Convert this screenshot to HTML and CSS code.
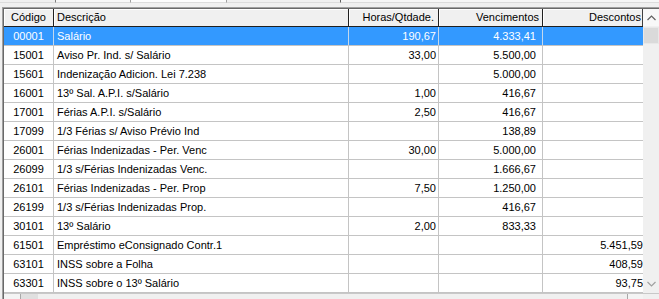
FILE: index.html
```html
<!DOCTYPE html>
<html lang="pt-BR">
<head>
<meta charset="utf-8">
<link rel="stylesheet" href="styles.css">
</head>
<body>
<div class="top">
  <div class="tb tb1"></div>
  <div class="tb tb1b"></div>
  <div class="tb tb2"></div>
  <div class="tb tb3"></div>
  <div class="tb tb4"></div>
</div>
<div class="frame">
  <div class="main">
    <div class="grid">
      <div class="row head">
        <div class="c code">Código</div>
        <div class="c desc">Descrição</div>
        <div class="c hrs">Horas/Qtdade.</div>
        <div class="c venc">Vencimentos</div>
        <div class="c dsc">Descontos</div>
      </div>
      <div class="row sel"><div class="c code">00001</div><div class="c desc">Salário</div><div class="c hrs">190,67</div><div class="c venc">4.333,41</div><div class="c dsc"></div></div>
      <div class="row"><div class="c code">15001</div><div class="c desc">Aviso Pr. Ind. s/ Salário</div><div class="c hrs">33,00</div><div class="c venc">5.500,00</div><div class="c dsc"></div></div>
      <div class="row"><div class="c code">15601</div><div class="c desc">Indenização Adicion. Lei 7.238</div><div class="c hrs"></div><div class="c venc">5.000,00</div><div class="c dsc"></div></div>
      <div class="row"><div class="c code">16001</div><div class="c desc">13º Sal. A.P.I. s/Salário</div><div class="c hrs">1,00</div><div class="c venc">416,67</div><div class="c dsc"></div></div>
      <div class="row"><div class="c code">17001</div><div class="c desc">Férias A.P.I. s/Salário</div><div class="c hrs">2,50</div><div class="c venc">416,67</div><div class="c dsc"></div></div>
      <div class="row"><div class="c code">17099</div><div class="c desc">1/3 Férias s/ Aviso Prévio Ind</div><div class="c hrs"></div><div class="c venc">138,89</div><div class="c dsc"></div></div>
      <div class="row"><div class="c code">26001</div><div class="c desc">Férias Indenizadas - Per. Venc</div><div class="c hrs">30,00</div><div class="c venc">5.000,00</div><div class="c dsc"></div></div>
      <div class="row"><div class="c code">26099</div><div class="c desc">1/3 s/Férias Indenizadas Venc.</div><div class="c hrs"></div><div class="c venc">1.666,67</div><div class="c dsc"></div></div>
      <div class="row"><div class="c code">26101</div><div class="c desc">Férias Indenizadas - Per. Prop</div><div class="c hrs">7,50</div><div class="c venc">1.250,00</div><div class="c dsc"></div></div>
      <div class="row"><div class="c code">26199</div><div class="c desc">1/3 s/Férias Indenizadas Prop.</div><div class="c hrs"></div><div class="c venc">416,67</div><div class="c dsc"></div></div>
      <div class="row"><div class="c code">30101</div><div class="c desc">13º Salário</div><div class="c hrs">2,00</div><div class="c venc">833,33</div><div class="c dsc"></div></div>
      <div class="row"><div class="c code">61501</div><div class="c desc">Empréstimo eConsignado Contr.1</div><div class="c hrs"></div><div class="c venc"></div><div class="c dsc">5.451,59</div></div>
      <div class="row"><div class="c code">63101</div><div class="c desc">INSS sobre a Folha</div><div class="c hrs"></div><div class="c venc"></div><div class="c dsc">408,59</div></div>
      <div class="row"><div class="c code">63301</div><div class="c desc">INSS sobre o 13º Salário</div><div class="c hrs"></div><div class="c venc"></div><div class="c dsc">93,75</div></div>
    </div>
    <div class="vscroll">
      <div class="sbtn">
        <svg width="9" height="6" viewBox="0 0 9 6"><path d="M0.5 5 L4.5 1 L8.5 5" fill="none" stroke="#606060" stroke-width="1.2"/></svg>
      </div>
      <div class="thumb"></div>
      <div class="track"></div>
      <div class="sbtn">
        <svg width="9" height="6" viewBox="0 0 9 6"><path d="M0.5 1 L4.5 5 L8.5 1" fill="none" stroke="#a0a0a0" stroke-width="1.2"/></svg>
      </div>
    </div>
  </div>
  <div class="hscroll">
    <div class="hbtn"></div>
    <div class="hthumb"></div>
    <div class="htrack"></div>
    <div class="hbtn hbtn-r"></div>
    <div class="corner"></div>
  </div>
</div>
</body>
</html>
```
FILE: styles.css
```css
html, body {
  margin: 0;
  padding: 0;
}
body {
  width: 659px;
  height: 299px;
  overflow: hidden;
  background: #f0f0f0;
  font-family: "Liberation Sans", Arial, sans-serif;
  font-size: 11px;
  color: #000;
}
.top {
  height: 7px;
  display: flex;
  align-items: flex-start;
  background: #f0f0f0;
}
.tb {
  height: 3px;
  box-sizing: border-box;
  border-right: 1px solid #a0a0a0;
  border-bottom: 1px solid #dcdcdc;
}
.tb1 { width: 56px; background: #f0f0f0; border-right-color: #808080; }
.tb1b { width: 75px; background: #f8f8f8; border-right-color: #a0a0a0; }
.tb2 { width: 96px; background: #fcfcfc; }
.tb3 { width: 114px; background: #f0f0f0; border-right-color: #606060; }
.tb4 { width: 318px; background: #f7f7f7; border-right: none; }
.frame {
  margin-left: 2px;
  border-top: 1px solid #a0a0a0;
  border-left: 1px solid #a0a0a0;
  box-shadow: inset 1px 1px 0 #696969;
  padding: 1px 0 0 1px;
}
.main {
  display: flex;
}
.grid {
  width: 639px;
  background: #fff;
}
.row {
  display: grid;
  grid-template-columns: 50px 295px 90px 104px 100px;
  height: 19px;
  box-sizing: border-box;
  border-bottom: 1px solid #c4c4c4;
  line-height: 18px;
}
.c {
  border-right: 1px solid #c4c4c4;
  white-space: nowrap;
  overflow: hidden;
}
.c.dsc { border-right: none; }
.code { text-align: center; }
.desc { padding-left: 3px; }
.hrs { text-align: right; padding-right: 2px; }
.venc { text-align: right; padding-right: 6px; }
.dsc { text-align: right; padding-right: 0; }
.row.head {
  height: 18px;
  line-height: 17px;
  background: #f0f0f0;
  border-bottom: 1px solid #202020;
}
.head .c {
  border-right: 1px solid #202020;
  box-shadow: inset 1px 1px 0 #fff;
}
.head .c.dsc { border-right: 1px solid #404040; }
.head .hrs { padding-right: 4px; }
.head .venc { padding-right: 3px; }
.head .dsc { padding-right: 1px; }
.row.sel {
  background: #3399ff;
  color: #fff;
}
.row.sel .c { border-right-color: #c4d8ec; }
.vscroll {
  width: 16px;
  display: flex;
  flex-direction: column;
  background: #f0f0f0;
}
.sbtn {
  height: 17px;
  display: flex;
  align-items: center;
  justify-content: center;
  background: #f8f8f8;
}
.thumb {
  height: 17px;
  margin: 1px 0 0 0;
  background: #dadada;
  border: 1px solid #e8e8e8;
  box-sizing: border-box;
}
.track {
  flex: 1;
  background: #f0f0f0;
}
.vscroll .sbtn:last-child {
  background: #f0f0f0;
  height: 18px;
}
.hscroll {
  display: flex;
  height: 6px;
  border-top: 1px solid #c8c8c8;
  background: #f0f0f0;
}
.hbtn {
  width: 16px;
  background: #f4f4f4;
}
.hthumb {
  width: 17px;
  background: #e0e0e0;
  border-left: 1px solid #a8a8a8;
}
.htrack {
  flex: 1;
  background: #f0f0f0;
}
.hbtn-r {
  width: 15px;
  border-left: 1px solid #a8a8a8;
}
.corner {
  width: 16px;
  background: #f0f0f0;
}
```
